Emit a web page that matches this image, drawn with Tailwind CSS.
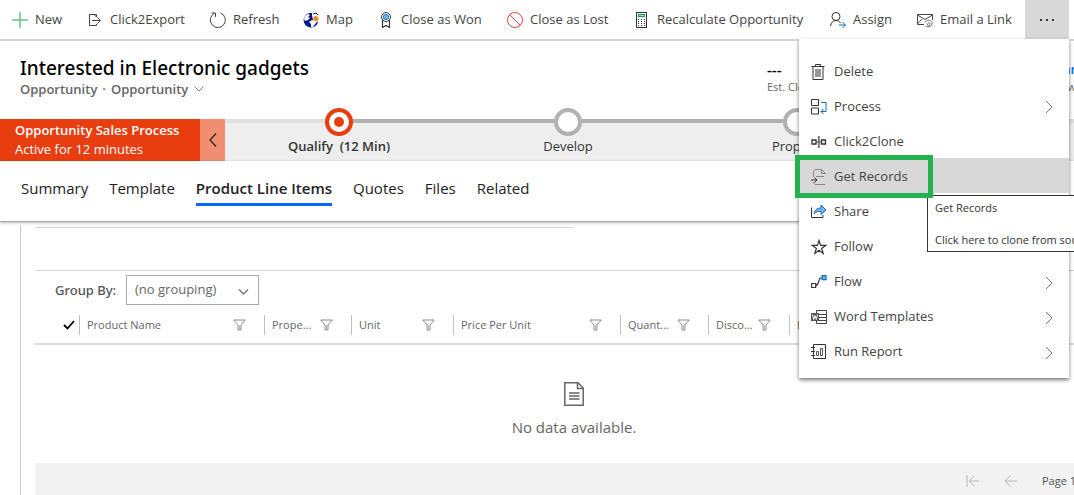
<!DOCTYPE html>
<html lang="en">
<head>
<meta charset="utf-8">
<meta name="viewport" content="width=device-width, initial-scale=1">
<title>Interested in Electronic gadgets - Opportunity</title>
<script src="https://cdn.jsdelivr.net/npm/@tailwindcss/browser@4"></script>
</head>
<body class="relative flex h-screen flex-col overflow-hidden bg-white font-['Open_Sans','Noto_Sans',sans-serif] text-[13px] text-[#444]">
<svg class="hidden">
  <symbol id="funnel" viewBox="0 0 13 12"><path d="M.8 1h11.4L8 6v5H5V6z" fill="none" stroke="#8a8a8a"/><path d="M6.500 6v5" stroke="#bbb"/></symbol>
  <symbol id="chev" viewBox="0 0 8 14"><path d="M1 1l6 6-6 6" fill="none" stroke="#777"/></symbol>
</svg>

<nav aria-label="Commands" class="flex h-[41px] shrink-0 border-b-2 border-[#d6d6d6]">
  <button class="flex w-[75px] shrink-0 items-center gap-[7px] whitespace-nowrap pl-3">
    <svg class="size-4 shrink-0" viewBox="0 0 16 16"><path d="M8 0v16M0 8h16" stroke="#6cc08b" stroke-width="1.500"/></svg>New</button>
  <button class="flex w-[123px] shrink-0 items-center gap-[7px] whitespace-nowrap pl-3">
    <svg class="size-4 shrink-0" viewBox="0 0 16 16" fill="none" stroke="#444"><path d="M9.500 5V2.500H2.500v11h7V12M5 8.500h8M10.500 5.500l3 3-3 3M7 2.500l2.500 2.500"/></svg>Click2Export</button>
  <button class="flex w-[93px] shrink-0 items-center gap-[7px] whitespace-nowrap pl-3">
    <svg class="size-4 shrink-0" viewBox="0 0 16 16" fill="none" stroke="#444"><path d="M4.500 1.300A7.500 7.500 0 1 0 10.500 1M1.500 1h4v4"/></svg>Refresh</button>
  <button class="flex w-[75px] shrink-0 items-center gap-[7px] whitespace-nowrap pl-3">
    <svg class="size-4 shrink-0" viewBox="0 0 16 16"><path d="M9 1a7.300 7.300 0 1 0 6 9l-2-2-3-1-1-3z" fill="#00188f"/><path d="M2 4l3-2 2 1-2 2 2 1-2 2-3 1-1-2zM9 8l3 1 1 2-3 4H8l0-3-2-2z" fill="#fff"/><path d="M7 3l2 1 1 4-3-2z" fill="#00188f"/><path d="M12.800 3c2 0 3.200 1.400 3.200 3.200S14.500 9 12.800 11C11 9 9.600 8 9.600 6.200S11 3 12.800 3z" fill="#fff"/><circle cx="12.800" cy="6.500" r="2.600" fill="#ff8c1a"/><path d="M10 2l3-1 2 2" fill="none" stroke="#00188f"/></svg>Map</button>
  <button class="flex w-[129px] shrink-0 items-center gap-[7px] whitespace-nowrap pl-3">
    <svg class="size-4 shrink-0" viewBox="0 0 16 16" fill="none" stroke="#333"><path d="M4.500 8v7.500l3.500-2 3.500 2V8" stroke-width="1.200"/><circle cx="8" cy="5" r="4.500" fill="#fff"/><circle cx="8" cy="5" r="2.700" fill="#71b5f0" stroke="#2b7cc4"/></svg>Close as Won</button>
  <button class="flex w-[127px] shrink-0 items-center gap-[7px] whitespace-nowrap pl-3">
    <svg class="size-4 shrink-0" viewBox="0 0 16 16" fill="none" stroke="#e8404a"><circle cx="8" cy="8" r="7.500"/><path d="M2.700 2.700l10.600 10.600"/></svg>Close as Lost</button>
  <button class="flex w-[196px] shrink-0 items-center gap-[7px] whitespace-nowrap pl-3">
    <svg class="size-4 shrink-0" viewBox="0 0 16 16"><rect x="2.500" y=".5" width="10" height="15" fill="#fff" stroke="#333"/><rect x="4.500" y="2.500" width="6" height="2" fill="#9be0b0" stroke="#17a04a"/><path d="M4 7.500h8M4 9.500h8M4 11.500h8M4 13.500h8" stroke="#333" stroke-dasharray="1 2"/></svg>Recalculate Opportunity</button>
  <button class="flex w-[87px] shrink-0 items-center gap-[7px] whitespace-nowrap pl-3">
    <svg class="size-4 shrink-0" viewBox="0 0 16 16" fill="none" stroke="#333"><circle cx="6" cy="4.500" r="4"/><path d="M.5 14c.3-3 2.500-5.500 5.500-5.500 2 0 3.500.8 4.500 2.500"/><path d="M9 13h6.500M12.500 10l3 3-3 3" stroke="#106ebe"/></svg>Assign</button>
  <button class="flex w-[120px] shrink-0 items-center gap-[7px] whitespace-nowrap pl-3">
    <svg class="size-4 shrink-0" viewBox="0 0 16 16" fill="none" stroke="#444"><path d="M7 12.500H.5v-10h15V8M.5 3L8 7.500 15.500 3M.5 12L5 7"/><path d="M8 10.500c1-2 4-3 6-1.500s1 5-1 5.200c-2.500.2-3.500-2.500-1.500-3.200 1.500-.4 2 1.500.8 1.800M8.500 14c1 .8 3 1 4 .5" stroke="#666"/></svg>Email a Link</button>
  <button aria-label="More commands" aria-expanded="true" class="flex w-11 shrink-0 items-center justify-center bg-[#d8d8d8]">
    <svg class="h-1 w-4" viewBox="0 0 16 4" fill="#333"><path d="M1 1h2v2H1zM7 1h2v2H7zM13 1h2v2h-2z"/></svg></button>
</nav>

<header class="flex h-[78px] shrink-0 pt-3.5 pl-5">
  <div class="min-w-0 flex-1">
    <h1 class="font-['Noto_Sans','Open_Sans',sans-serif] text-[19px] leading-[26px] font-medium text-black">Interested in Electronic gadgets</h1>
    <p class="flex items-center text-[13px] leading-4 font-semibold text-[#666]">Opportunity<span class="mx-[5px]">·</span>Opportunity
      <button aria-label="Switch form" class="ml-1.5"><svg class="h-1.5 w-2.5" viewBox="0 0 10 6"><path d="M.5.500l4.500 4.500L9.500.500" fill="none" stroke="#888"/></svg></button></p>
  </div>
  <dl class="-mr-9 flex shrink-0 pt-1 text-[11px]">
    <div class="flex w-[292px] flex-col-reverse justify-end"><dt class="leading-4 text-[#666]">Est. Close Date</dt><dd class="text-[15px] leading-5 font-semibold text-black">---</dd></div>
    <div class="flex w-[51px] flex-col-reverse justify-end"><dt class="leading-4 text-[#666]">Owner</dt><dd class="text-[13px] leading-5 font-semibold"><a href="#" class="text-[#0066ff]">Jan</a></dd></div>
  </dl>
</header>

<section aria-label="Business process" class="flex h-[42px] shrink-0 bg-[#eee]">
  <div class="w-[200px] shrink-0 bg-[#e83d0f] pt-0.5 pl-[15px] text-[13px] leading-[19px] text-white"><h2 class="font-semibold">Opportunity Sales Process</h2><p>Active for 12 minutes</p></div>
  <button aria-label="Collapse process" class="flex w-[25px] shrink-0 items-center justify-center bg-[#f18e72]"><svg class="h-3.5 w-2" viewBox="0 0 8 14"><path d="M7 .5L1 7l6 6.500" fill="none" stroke="#222" stroke-width="1.200"/></svg></button>
  <ol class="flex text-[#333]">
    <li class="flex w-[228px] shrink-0 flex-col items-center">
      <div class="flex h-1 w-full shrink-0"><i class="flex-1 bg-[#e0e0e0]"></i><i class="flex-1 bg-[#b2b2b2]"></i></div>
      <button aria-label="Qualify stage" class="-mt-[15px] flex size-7 shrink-0 items-center justify-center rounded-full border-4 border-[#e83d0f] bg-white"><i class="size-2.5 rounded-full bg-[#e83d0f]"></i></button>
      <span class="leading-5 font-semibold whitespace-pre">Qualify  (12 Min)</span></li>
    <li class="flex w-[230px] shrink-0 flex-col items-center">
      <div class="h-1 w-full shrink-0 bg-[#b2b2b2]"></div>
      <button aria-label="Develop stage" class="-mt-[15px] size-7 shrink-0 rounded-full border-4 border-[#b2b2b2] bg-white"></button>
      <span class="leading-5">Develop</span></li>
    <li class="flex w-[228px] shrink-0 flex-col items-center">
      <div class="h-1 w-full shrink-0 bg-[#b2b2b2]"></div>
      <button aria-label="Propose stage" class="-mt-[15px] size-7 shrink-0 rounded-full border-4 border-[#b2b2b2] bg-white"></button>
      <span class="leading-5">Propose</span></li>
    <li class="flex w-[230px] shrink-0 flex-col items-center">
      <div class="flex h-1 w-full shrink-0"><i class="flex-1 bg-[#b2b2b2]"></i><i class="flex-1 bg-[#e0e0e0]"></i></div>
      <button aria-label="Close stage" class="-mt-[15px] size-7 shrink-0 rounded-full border-4 border-[#b2b2b2] bg-white"></button>
      <span class="leading-5">Close</span></li>
  </ol>
</section>

<nav aria-label="Form tabs" class="z-10 flex h-[61px] shrink-0 items-start gap-[21px] border-b border-[#a8a8a8] bg-white pt-4 pl-[21px] text-[15px] leading-[22px] text-[#222] shadow-[0_1px_3px_#0004]">
  <a href="#" class="whitespace-nowrap">Summary</a>
  <a href="#" class="whitespace-nowrap">Template</a>
  <a href="#" aria-current="page" class="border-b-3 border-[#0066ff] pb-1 font-semibold whitespace-nowrap">Product Line Items</a>
  <a href="#" class="whitespace-nowrap">Quotes</a>
  <a href="#" class="whitespace-nowrap">Files</a>
  <a href="#" class="whitespace-nowrap">Related</a>
</nav>

<main class="mt-[3px] -mr-[39px] ml-5 flex min-h-0 flex-1 flex-col border-l border-[#c8c8c8] pl-3.5">
  <hr class="mt-0.5 w-1/2 border-[#d6d6d6]">
  <hr class="mt-[42px] border-[#d6d6d6]">
  <div class="mt-1 flex items-center pl-5 text-[#555]">
    <label for="group" class="w-[71px] pt-0.5 text-[13px] font-['Noto_Sans','Open_Sans',sans-serif] font-medium whitespace-nowrap">Group By:</label>
    <div class="relative">
      <select id="group" class="h-[30px] w-[133px] appearance-none border border-[#aaa] bg-white pl-2 text-[13px] text-[#666]"><option>(no grouping)</option></select>
      <svg class="pointer-events-none absolute top-[13px] right-2.5 h-2 w-[11px]" viewBox="0 0 11 8"><path d="M1 1.500l4.500 4.500L10 1.500" fill="none" stroke="#777" stroke-width="1.500"/></svg>
    </div>
  </div>
  <table class="mt-2.5 w-full table-fixed text-left text-[11px] text-[#666]">
    <colgroup><col class="w-11"><col class="w-[185px]"><col class="w-[87px]"><col class="w-[102px]"><col class="w-[167px]"><col class="w-[88px]"><col class="w-[81px]"><col></colgroup>
    <thead><tr class="border-b-2 border-[#dcdcdc]">
      <th scope="col" class="pb-2 pl-7"><button aria-label="Select all rows" class="block"><svg class="h-2.5 w-3" viewBox="0 0 12 10"><path d="M1 5l3.500 3.500L11 1" fill="none" stroke="#000" stroke-width="1.800"/></svg></button></th>
      <th scope="col" class="pb-2 font-normal"><div class="flex h-5 items-center justify-between border-l border-[#c0c0c0] pr-[18px] pl-[7px]">Product Name<button aria-label="Filter Product Name"><svg class="h-3 w-[13px]"><use href="#funnel"/></svg></button></div></th>
      <th scope="col" class="pb-2 font-normal"><div class="flex h-5 items-center justify-between border-l border-[#c0c0c0] pr-[18px] pl-[7px]">Prope...<button aria-label="Filter Properties"><svg class="h-3 w-[13px]"><use href="#funnel"/></svg></button></div></th>
      <th scope="col" class="pb-2 font-normal"><div class="flex h-5 items-center justify-between border-l border-[#c0c0c0] pr-[18px] pl-[7px]">Unit<button aria-label="Filter Unit"><svg class="h-3 w-[13px]"><use href="#funnel"/></svg></button></div></th>
      <th scope="col" class="pb-2 font-normal"><div class="flex h-5 items-center justify-between border-l border-[#c0c0c0] pr-[18px] pl-[7px]">Price Per Unit<button aria-label="Filter Price Per Unit"><svg class="h-3 w-[13px]"><use href="#funnel"/></svg></button></div></th>
      <th scope="col" class="pb-2 font-normal"><div class="flex h-5 items-center justify-between border-l border-[#c0c0c0] pr-[18px] pl-[7px]">Quant...<button aria-label="Filter Quantity"><svg class="h-3 w-[13px]"><use href="#funnel"/></svg></button></div></th>
      <th scope="col" class="pb-2 font-normal"><div class="flex h-5 items-center justify-between border-l border-[#c0c0c0] pr-[18px] pl-[7px]">Disco...<button aria-label="Filter Discount"><svg class="h-3 w-[13px]"><use href="#funnel"/></svg></button></div></th>
      <th scope="col" class="pb-2 font-normal"><div class="flex h-5 items-center border-l border-[#c0c0c0] pl-[7px]">Extended</div></th>
    </tr></thead>
    <tbody><tr><td colspan="8" class="pt-[37px] text-center text-[15px] leading-5">
      <svg class="mx-auto mb-[11px] h-6 w-5" viewBox="0 0 20 24" fill="none" stroke="#666" stroke-width="1.500"><path d="M.8.800h13.200l5.200 5.200v17.200H.8zM13.500 1v5.500H19M5 11h10.500M5 14h10.500M5 17h10.500"/></svg>No data available.</td></tr></tbody>
  </table>
  <footer class="mt-auto flex h-8 shrink-0 items-center justify-end gap-6 bg-[#f2f2f2] pt-1 pr-[37px] text-[11px] text-[#555]">
    <button aria-label="First page" disabled><svg class="h-3 w-3.5" viewBox="0 0 14 12" fill="none" stroke="#b8b8b8"><path d="M1 0v12M3 6h10M8 1L3 6l5 5"/></svg></button>
    <button aria-label="Previous page" disabled><svg class="h-3 w-3.5" viewBox="0 0 14 12" fill="none" stroke="#b8b8b8"><path d="M1 6h12M6.500.500L1 6l5.500 5.500"/></svg></button>
    <span>Page 1</span>
  </footer>
</main>

<div role="menu" class="absolute top-[39px] left-[799px] z-20 flex w-[270px] flex-col bg-white pt-3.5 pb-[10px] shadow-[0_2px_4px_#0008]">
  <button role="menuitem" class="flex h-[35px] items-center gap-[7px] pt-0.5 pr-4 pl-3">
    <svg class="size-4" viewBox="0 0 16 16" fill="none" stroke="#333"><path d="M.5 2.500h13M4.500 2.500v-2h5v2M2 2.500v13h10v-13M5 5v8M7 5v8M9 5v8"/></svg>Delete</button>
  <button role="menuitem" class="flex h-[35px] items-center gap-[7px] pt-0.5 pr-4 pl-3">
    <svg class="size-4" viewBox="0 0 16 16" fill="none" stroke="#333"><path d="M.5.500h7v6h-7zM.5 9h7v6h-7z"/><path d="M10 3.500h5v9h-5M12.500 10L10 12.500l2.500 2.500" stroke="#106ebe"/></svg>Process<svg class="ml-auto h-3.5 w-2"><use href="#chev"/></svg></button>
  <button role="menuitem" class="flex h-[35px] items-center gap-[7px] pt-0.5 pr-4 pl-3">
    <svg class="size-4" viewBox="0 0 16 16" fill="none" stroke="#333"><path d="M1 6h4v4H1zM10.500 6h4v4h-4z" stroke-width="1.300"/><path d="M5 8h5.500"/><path d="M7.800 2v12" stroke="#777" stroke-width="2"/></svg>Click2Clone</button>
  <button role="menuitem" class="flex h-[35px] items-center gap-[7px] bg-[#d8d8d8] pt-0.5 pr-4 pl-3">
    <svg class="size-4" viewBox="0 0 16 16" fill="none" stroke="#888"><path d="M2.500 8V2L4 .500h6.500l4 4h-4v-4M5 7.500h8M14 15.500H4L2.500 14v-1"/><path d="M0 11h6M3.500 8.500L6 11l-2.500 2.500" stroke="#333"/></svg>Get Records</button>
  <button role="menuitem" class="flex h-[35px] items-center gap-[7px] pt-0.5 pr-4 pl-3">
    <svg class="size-4" viewBox="0 0 16 16" fill="none" stroke="#333"><path d="M.5 3.500v10h11.500V11"/><path d="M3 10c.5-4 3-6 7-6V1l5 5-5 4.500V7.500C7 7 5 7.500 3 10z" fill="#71b5f0" stroke="#1e6cb5"/></svg>Share</button>
  <button role="menuitem" class="flex h-[35px] items-center gap-[7px] pt-0.5 pr-4 pl-3">
    <svg class="size-4" viewBox="0 0 16 16" fill="none" stroke="#333" stroke-width="1.200"><path d="M8 1.500l1.600 4.900h5.100l-4.100 3 1.600 5L8 11.300l-4.200 3.100 1.600-5-4.100-3h5.100z"/></svg>Follow</button>
  <button role="menuitem" class="flex h-[35px] items-center gap-[7px] pt-0.5 pr-4 pl-3">
    <svg class="size-4" viewBox="0 0 16 16" fill="none" stroke="#333" stroke-width="1.200"><path d="M.7 9.500h4v4h-4zM4.700 11.500c4 0 2-8 6-8"/><path d="M11 1.600h4v4h-4z" fill="#71b5f0" stroke="#106ebe"/></svg>Flow<svg class="mt-0.5 ml-auto h-3.5 w-2"><use href="#chev"/></svg></button>
  <button role="menuitem" class="flex h-[35px] items-center gap-[7px] pt-0.5 pr-4 pl-3">
    <svg class="size-4" viewBox="0 0 16 16" fill="none" stroke="#444"><path d="M5.500 4V1.500h10v13h-10V12M8 5.500h7.500M8 8.500h7.500M8 11.500h7.500"/><path d="M0 4h8v8H0z" fill="#555" stroke="none"/><path d="M1.500 5.500l1.200 5L4 6.500l1.300 4 1.200-5" stroke="#fff"/></svg>Word Templates<svg class="mt-0.5 ml-auto h-3.5 w-2"><use href="#chev"/></svg></button>
  <button role="menuitem" class="flex h-[35px] items-center gap-[7px] pt-0.5 pr-4 pl-3">
    <svg class="size-4" viewBox="0 0 16 16" fill="none" stroke="#333"><path d="M2.500.500h12v14h-12zM0 3.500h4M0 7.500h4M0 11.500h4"/><path d="M5.500 7.500h2v4h-2zM9.500 4.500h2v7h-2z" stroke="#555"/></svg>Run Report<svg class="mt-0.5 ml-auto h-3.5 w-2"><use href="#chev"/></svg></button>
</div>

<div role="tooltip" class="absolute top-[195px] left-[927px] z-30 border border-[#333] bg-white pt-1 pr-3 pb-[3px] pl-[7px] text-[11px] leading-4 whitespace-nowrap text-[#333]"><p>Get Records</p><p class="mt-4">Click here to clone from source</p></div>
<div class="pointer-events-none absolute top-[155px] left-[795px] z-40 h-[43px] w-[138px] border-5 border-[#22b14c]"></div>
</body>
</html>
